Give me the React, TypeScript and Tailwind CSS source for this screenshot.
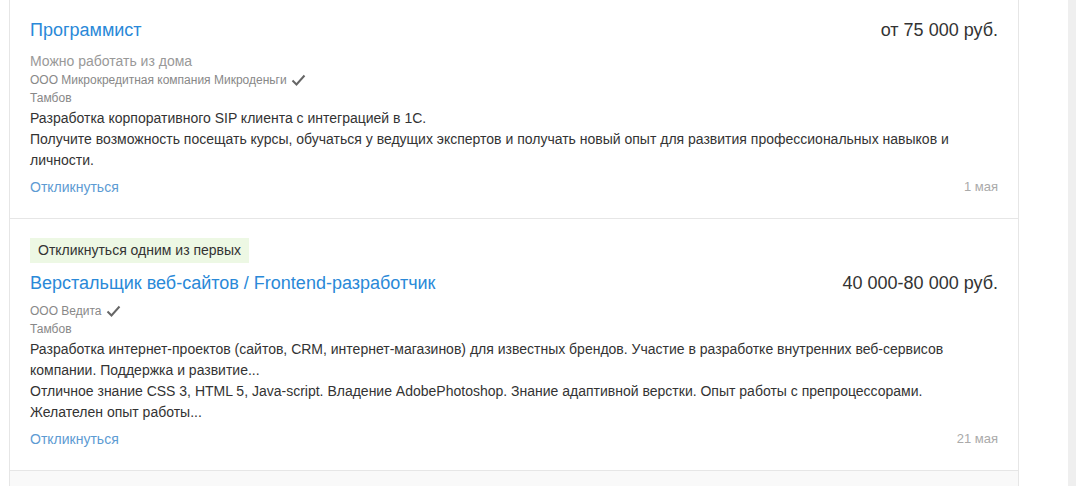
import React from "react";

const Check = () => (
  <svg width="15" height="12" viewBox="0 0 15 12" className="inline-block ml-1 -mt-[2px]">
    <polyline points="1.5,6.5 5.5,10.5 13.5,1.5" fill="none" stroke="#666" strokeWidth="2" />
  </svg>
);

type Vacancy = {
  badge?: string;
  title: string;
  salary: string;
  remote?: string;
  company: string;
  city: string;
  desc: string[];
  date: string;
};

const vacancies: Vacancy[] = [
  {
    title: "Программист",
    salary: "от 75 000 руб.",
    remote: "Можно работать из дома",
    company: "ООО Микрокредитная компания Микроденьги",
    city: "Тамбов",
    desc: [
      "Разработка корпоративного SIP клиента с интеграцией в 1С.",
      "Получите возможность посещать курсы, обучаться у ведущих экспертов и получать новый опыт для развития профессиональных навыков и личности.",
    ],
    date: "1 мая",
  },
  {
    badge: "Откликнуться одним из первых",
    title: "Верстальщик веб-сайтов / Frontend-разработчик",
    salary: "40 000-80 000 руб.",
    company: "ООО Ведита",
    city: "Тамбов",
    desc: [
      "Разработка интернет-проектов (сайтов, CRM, интернет-магазинов) для известных брендов. Участие в разработке внутренних веб-сервисов компании. Поддержка и развитие...",
      "Отличное знание CSS 3, HTML 5, Java-script. Владение AdobePhotoshop. Знание адаптивной верстки. Опыт работы с препроцессорами. Желателен опыт работы...",
    ],
    date: "21 мая",
  },
];

const VacancyItem = ({ v, first }: { v: Vacancy; first?: boolean }) => {
  return (
    <div className={`border-b border-[#e6e6e6] px-5 pb-[21px] ${first ? "pt-[18px]" : "pt-[19px]"}`}>
      {v.badge && (
        <div className="inline-block bg-[#edf8e4] text-[#333] text-[14px] leading-[25px] px-2 mb-2">
          {v.badge}
        </div>
      )}
      <div className="flex justify-between items-center">
        <a className="text-[18px] leading-[24px] text-[#2a89d8]">{v.title}</a>
        <span className="text-[18px] leading-[24px] text-[#333]">{v.salary}</span>
      </div>
      {v.remote ? (
        <div className="mt-[9px] text-[14px] leading-[20px] text-[#999]">{v.remote}</div>
      ) : (
        <div className="h-[7px]" />
      )}
      <div className="text-[12px] leading-[18px] text-[#888]">
        {v.company}
        <Check />
      </div>
      <div className="text-[12px] leading-[18px] text-[#888]">{v.city}</div>
      <div className="mt-[1px] text-[14px] leading-[21px] text-[#333]">
        {v.desc.map((d, i) => (
          <p key={i}>{d}</p>
        ))}
      </div>
      <div className="mt-[6px] flex justify-between items-center">
        <a className="text-[14px] leading-[20px] text-[#5d9bd3]">Откликнуться</a>
        <span className="text-[13px] leading-[20px] text-[#aaa]">{v.date}</span>
      </div>
    </div>
  );
};

export default function App() {
  return (
    <div
      className="flex h-[486px] w-[1076px] overflow-hidden bg-white"
      style={{ fontFamily: '"Liberation Sans", Arial, sans-serif' }}
    >
      <div className="w-[9px] shrink-0" />
      <div className="w-[1010px] shrink-0 border-x border-[#e6e6e6] flex flex-col">
        {vacancies.map((v, i) => (
          <VacancyItem key={i} v={v} first={i === 0} />
        ))}
        <div className="flex-1 bg-[#f9f9f9]" />
      </div>
      <div className="flex-1" />
      <div className="w-[8px] shrink-0 bg-[#efefef]" />
    </div>
  );
}
